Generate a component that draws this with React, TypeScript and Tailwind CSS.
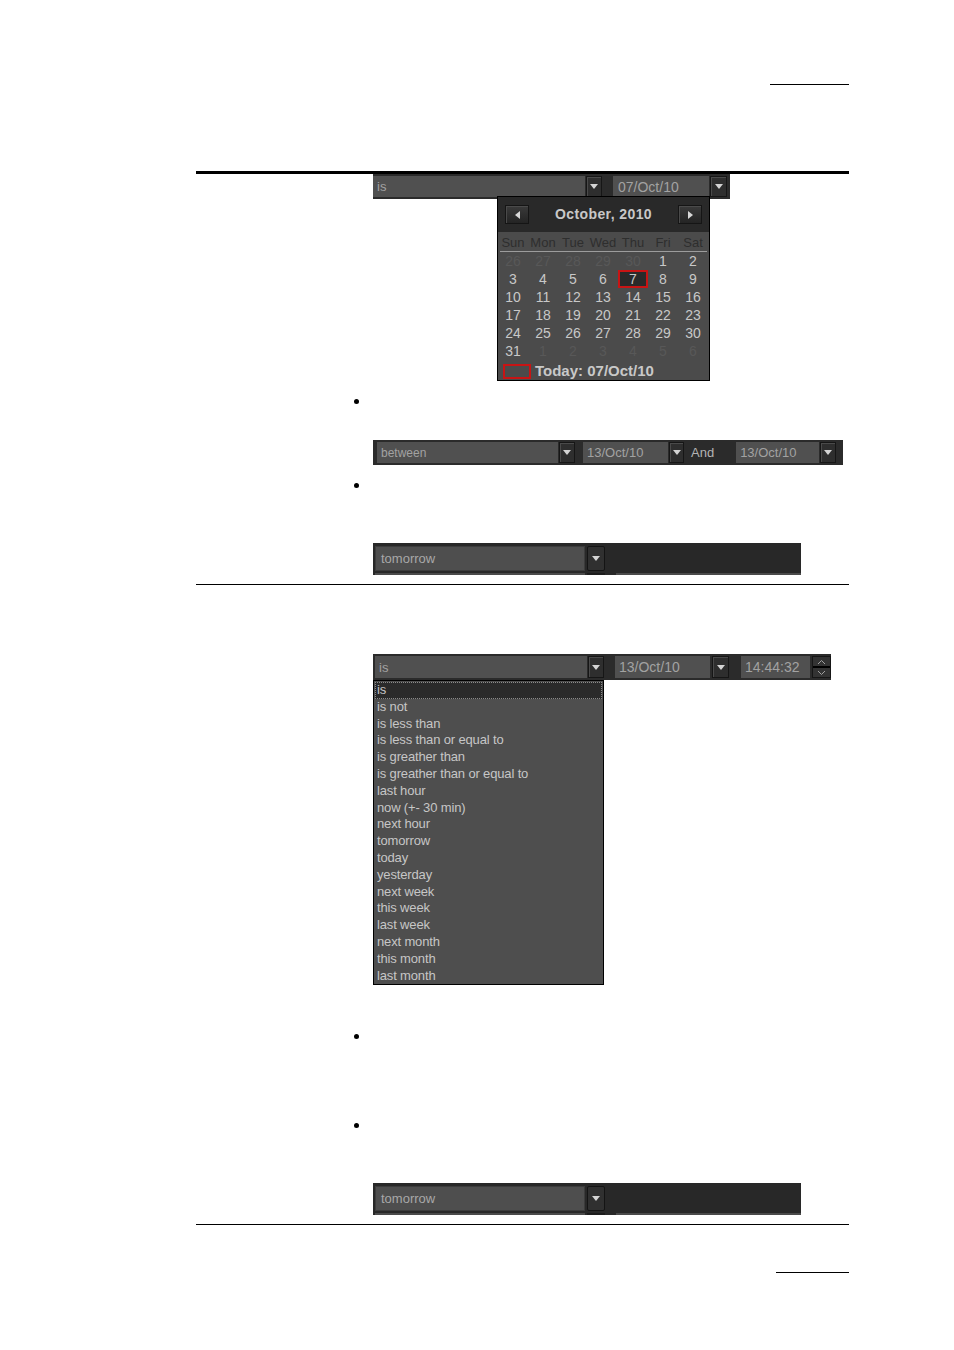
import React from "react";

const Tri = ({ up = false }: { up?: boolean }) => (
  <svg width="8" height="5" viewBox="0 0 8 5">
    <path d={up ? "M0 5 L4 0 L8 5 Z" : "M0 0 L8 0 L4 5 Z"} fill="#d4d4d4" />
  </svg>
);

const Arrow = ({ w = 16, cls = "" }: { w?: number; cls?: string }) => (
  <div
    className={`flex items-center justify-center bg-[#2e2e2e] border border-[#161616] shadow-[inset_1px_1px_0_#4a4a4a] ${cls}`}
    style={{ width: w }}
  >
    <Tri />
  </div>
);

const Field = ({
  w,
  text,
  size = 13,
  cls = "",
}: {
  w: number;
  text: string;
  size?: number;
  cls?: string;
}) => (
  <div
    className={`flex items-center bg-[#505050] text-[#a2a2a2] pl-[4px] pt-[1px] whitespace-nowrap overflow-hidden ${cls}`}
    style={{ width: w, fontSize: size }}
  >
    {text}
  </div>
);

const Bullet = ({ mt }: { mt: string }) => (
  <div className={`ml-[354px] w-[5px] h-[5px] rounded-full bg-black ${mt}`} />
);

const TomorrowStrip = ({ mt }: { mt: string }) => (
  <div className={`ml-[373px] w-[428px] h-[32px] bg-[#282828] flex flex-col ${mt}`}>
    <div className="flex h-[25px] mt-[3px]">
      <div className="ml-[2px] w-[210px] h-[25px] flex items-center bg-[#4e4e4e] border border-[#3c3c3c] text-[13px] text-[#a8a8a8] pl-[5px]">
        tomorrow
      </div>
      <div className="ml-[2px] w-[18px] h-[25px] flex items-center justify-center bg-[#303030] border border-[#141414] rounded-[2px]">
        <Tri />
      </div>
    </div>
    <div className="flex h-[2px] mt-[2px]">
      <div className="ml-[2px] w-[210px] bg-[#4a4a4a]" />
      <div className="ml-[2px] w-[18px] bg-[#1c1c1c]" />
      <div className="ml-[11px] w-[185px] bg-[#4a4a4a]" />
    </div>
  </div>
);

const weeks: { d: number; dim?: boolean }[][] = [
  [{ d: 26, dim: true }, { d: 27, dim: true }, { d: 28, dim: true }, { d: 29, dim: true }, { d: 30, dim: true }, { d: 1 }, { d: 2 }],
  [{ d: 3 }, { d: 4 }, { d: 5 }, { d: 6 }, { d: 7 }, { d: 8 }, { d: 9 }],
  [{ d: 10 }, { d: 11 }, { d: 12 }, { d: 13 }, { d: 14 }, { d: 15 }, { d: 16 }],
  [{ d: 17 }, { d: 18 }, { d: 19 }, { d: 20 }, { d: 21 }, { d: 22 }, { d: 23 }],
  [{ d: 24 }, { d: 25 }, { d: 26 }, { d: 27 }, { d: 28 }, { d: 29 }, { d: 30 }],
  [{ d: 31 }, { d: 1, dim: true }, { d: 2, dim: true }, { d: 3, dim: true }, { d: 4, dim: true }, { d: 5, dim: true }, { d: 6, dim: true }],
];

const days = ["Sun", "Mon", "Tue", "Wed", "Thu", "Fri", "Sat"];

const NavBtn = ({ right = false }: { right?: boolean }) => (
  <div className="w-[24px] h-[19px] flex items-center justify-center bg-gradient-to-b from-[#3a3a3a] to-[#242424] border border-[#151515] shadow-[inset_1px_1px_0_#4a4a4a]">
    <svg width="5" height="8" viewBox="0 0 5 8">
      <path d={right ? "M0 0 L5 4 L0 8 Z" : "M5 0 L0 4 L5 8 Z"} fill="#d8d8d8" />
    </svg>
  </div>
);

const Calendar = () => (
  <div className="ml-[497px] -mt-[3px] w-[213px] h-[185px] border border-black bg-[#4b4b4b] relative">
    <div className="h-[35px] bg-[#292929] flex items-center justify-between px-[7px]">
      <NavBtn />
      <div className="text-[14px] font-bold tracking-[0.4px] text-[#c8c8c8]">October, 2010</div>
      <NavBtn right />
    </div>
    <div className="mt-[3px] grid grid-cols-[repeat(7,30px)] h-[16px] text-[13px] leading-[16px] text-[#2e2e2e]">
      {days.map((d) => (
        <div key={d} className="text-center">
          {d}
        </div>
      ))}
    </div>
    <div className="mx-[2px] h-px bg-[#9c9c9c]" />
    {weeks.map((w, i) => (
      <div key={i} className="grid grid-cols-[repeat(7,30px)] h-[18px] text-[14px] leading-[18px]">
        {w.map((c, j) => {
          const sel = i === 1 && j === 4;
          return (
            <div
              key={j}
              className={`text-center ${c.dim ? "text-[#585858]" : "text-[#c8c8c8]"} ${
                sel ? "border-2 border-[#c81414] bg-[#2a2a2a] leading-[14px]" : ""
              }`}
            >
              {c.d}
            </div>
          );
        })}
      </div>
    ))}
    <div className="flex items-center mt-[3px] h-[16px]">
      <div className="ml-[5px] w-[28px] h-[15px] border-2 border-[#c81414]" />
      <div className="ml-[4px] text-[15px] font-bold text-[#c8c8c8] leading-[16px]">Today: 07/Oct/10</div>
    </div>
  </div>
);

const listItems = [
  "is",
  "is not",
  "is less than",
  "is less than or equal to",
  "is greather than",
  "is greather than or equal to",
  "last hour",
  "now (+- 30 min)",
  "next hour",
  "tomorrow",
  "today",
  "yesterday",
  "next week",
  "this week",
  "last week",
  "next month",
  "this month",
  "last month",
];

export default function App() {
  return (
    <div
      className="w-[954px] h-[1350px] bg-white flex flex-col"
      style={{ fontFamily: '"Liberation Sans", Arial, sans-serif' }}
    >
      <div className="mt-[84px] ml-[770px] w-[79px] h-px bg-black" />
      <div className="mt-[86px] ml-[196px] w-[653px] h-[3px] bg-black" />

      {/* Strip 1 */}
      <div className="ml-[373px] w-[357px] h-[25px] bg-[#2b2b2b] flex py-[2px] relative z-0">
        <Field w={212} text="is" size={13} />
        <Arrow w={16} cls="ml-[1px]" />
        <Field w={96} text="07/Oct/10" size={14} cls="ml-[11px] pl-[5px]" />
        <Arrow w={17} cls="ml-[1px]" />
      </div>
      <div className="relative z-10">
        <Calendar />
      </div>

      <Bullet mt="mt-[18px]" />

      {/* Strip 2 */}
      <div className="mt-[36px] ml-[373px] w-[470px] h-[25px] bg-[#2b2b2b] flex py-[2px]">
        <Field w={181} text="between" size={12} cls="ml-[4px]" />
        <Arrow w={16} cls="ml-[1px]" />
        <Field w={85} text="13/Oct/10" size={13} cls="ml-[8px]" />
        <Arrow w={15} cls="ml-[1px]" />
        <div className="ml-[7px] flex items-center text-[13px] text-[#b4b4b4]">And</div>
        <Field w={83} text="13/Oct/10" size={13} cls="ml-[22px]" />
        <Arrow w={16} cls="ml-[1px]" />
      </div>

      <Bullet mt="mt-[18px]" />

      <TomorrowStrip mt="mt-[55px]" />

      <div className="mt-[9px] ml-[196px] w-[653px] h-px bg-black" />

      {/* Strip 4 */}
      <div className="mt-[69px] ml-[373px] w-[458px] h-[26px] bg-[#2b2b2b] flex py-[2px]">
        <Field w={212} text="is" size={13} cls="ml-[2px]" />
        <Arrow w={16} cls="ml-[1px]" />
        <Field w={95} text="13/Oct/10" size={14} cls="ml-[11px]" />
        <Arrow w={17} cls="ml-[2px]" />
        <Field w={69} text="14:44:32" size={14} cls="ml-[12px]" />
        <div className="ml-[2px] w-[19px] flex flex-col bg-[#333333] border border-[#161616]">
          <div className="flex-1 flex items-center justify-center">
            <svg width="7" height="4" viewBox="0 0 7 4">
              <path d="M0 4 L3.5 0.5 L7 4" fill="none" stroke="#a0a0a0" strokeWidth="1" />
            </svg>
          </div>
          <div className="h-[2px] bg-black" />
          <div className="flex-1 flex items-center justify-center">
            <svg width="7" height="4" viewBox="0 0 7 4">
              <path d="M0 0 L3.5 3.5 L7 0" fill="none" stroke="#a0a0a0" strokeWidth="1" />
            </svg>
          </div>
        </div>
      </div>
      <div className="ml-[373px] w-[231px] h-[305px] border border-black bg-[#4e4e4e] pt-[1px]">
        {listItems.map((t, i) => (
          <div
            key={t}
            className={`h-[16.8px] text-[13px] tracking-[-0.15px] text-[#c6c6c6] whitespace-nowrap ${
              i === 0
                ? "mx-[1px] bg-[#2a2a2a] border border-dotted border-[#8a8a8a] pl-[1px] leading-[14.8px]"
                : "pl-[3px] leading-[16.8px]"
            }`}
          >
            {t}
          </div>
        ))}
      </div>

      <Bullet mt="mt-[49px]" />
      <Bullet mt="mt-[84px]" />

      <TomorrowStrip mt="mt-[55px]" />

      <div className="mt-[9px] ml-[196px] w-[653px] h-px bg-black" />
      <div className="mt-[47px] ml-[776px] w-[73px] h-px bg-black" />
    </div>
  );
}
